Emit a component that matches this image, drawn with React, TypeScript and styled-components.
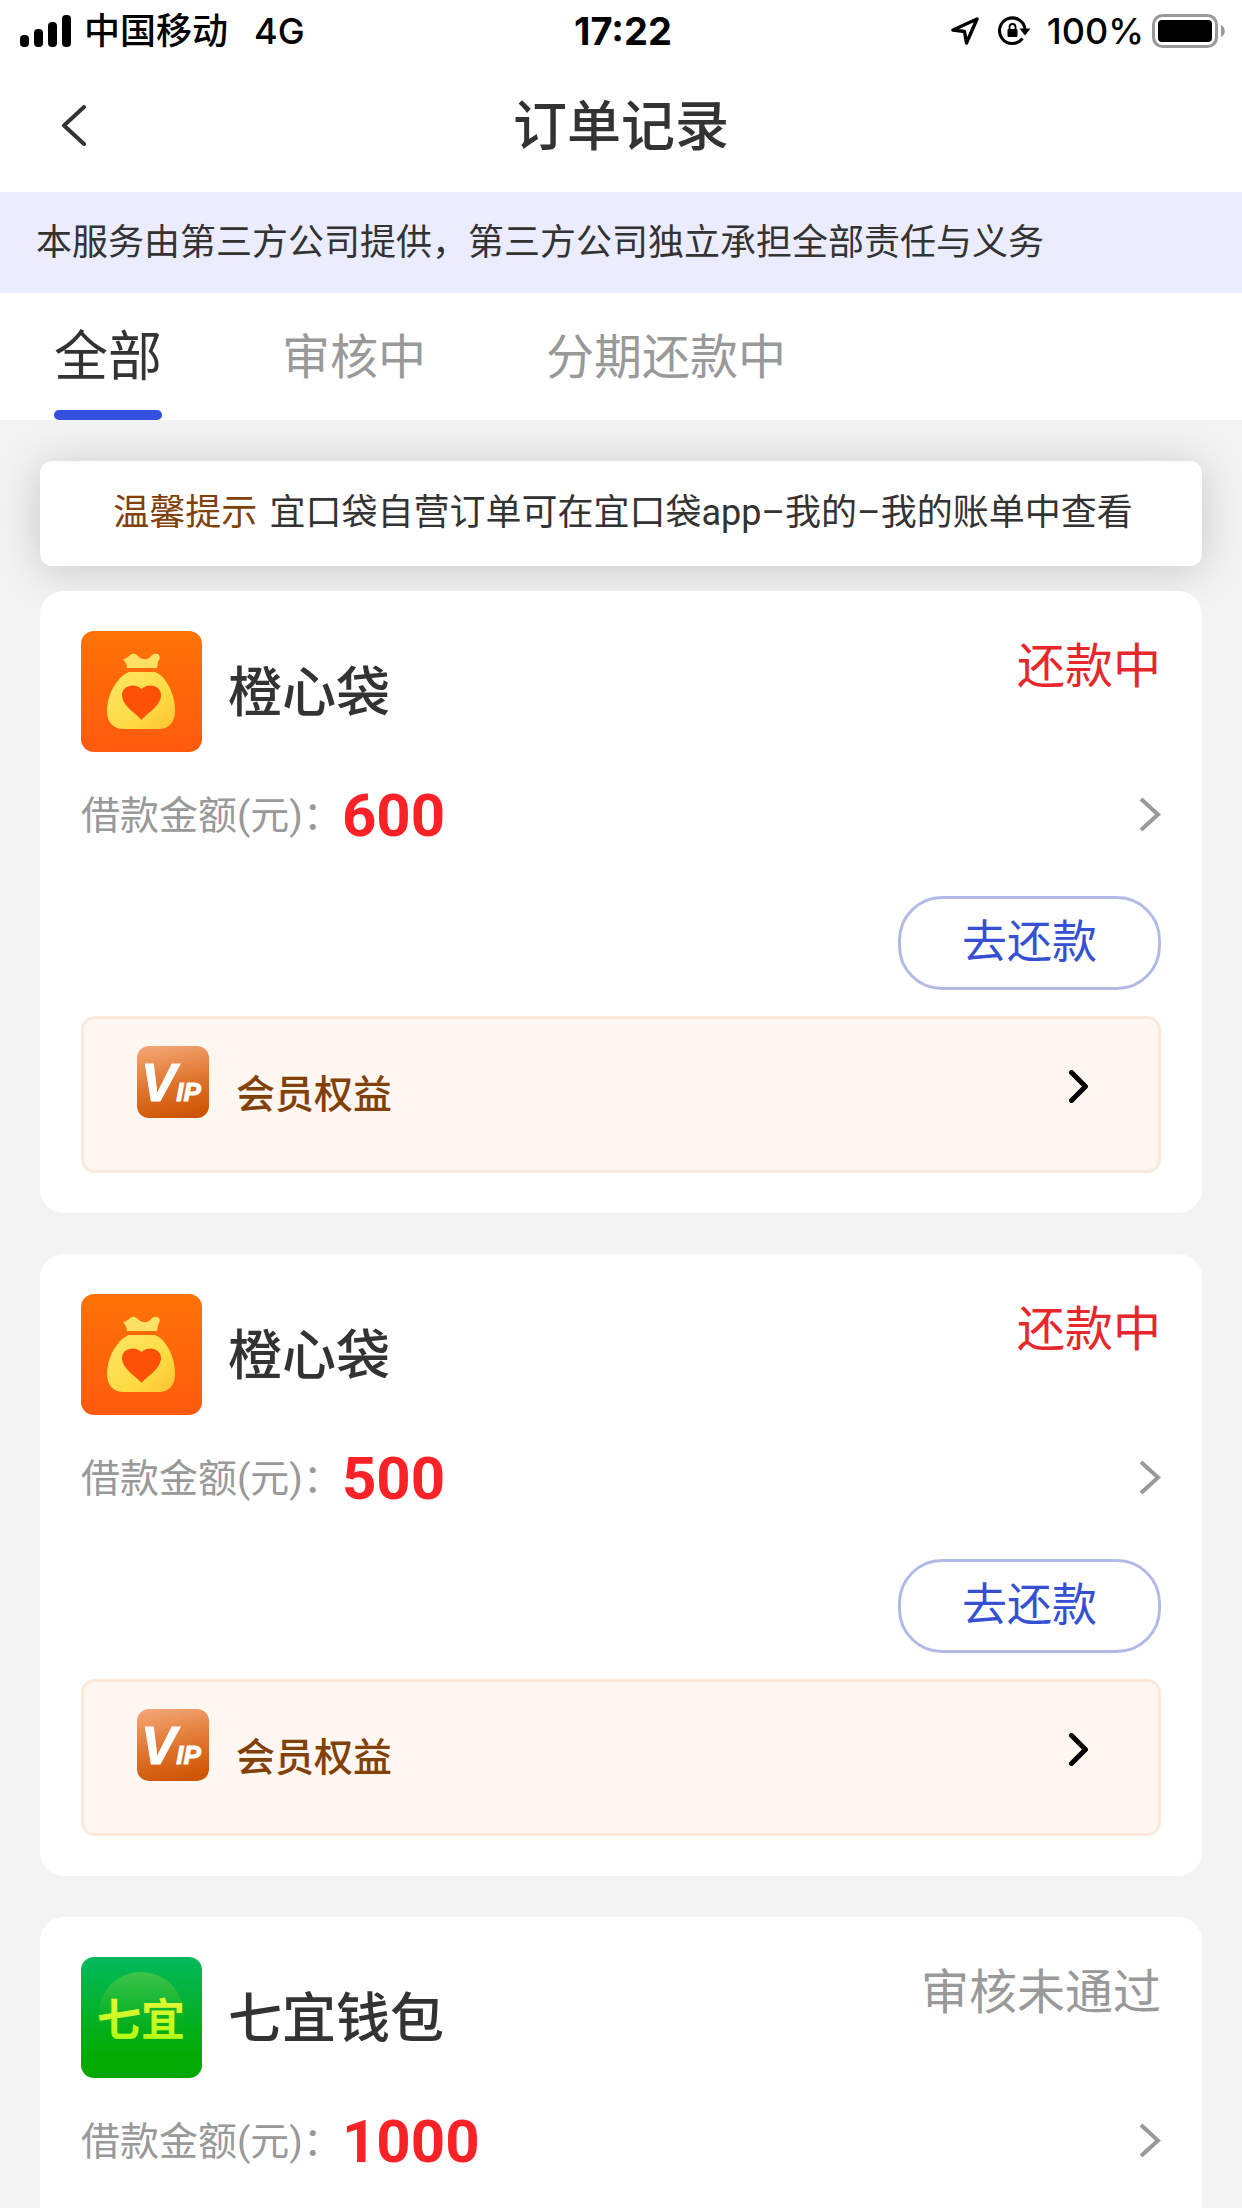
import React, { useState } from "react";
import styled, { createGlobalStyle } from "styled-components";

const GlobalStyle = createGlobalStyle`
  *, *::before, *::after { box-sizing: border-box; }
  body {
    margin: 0;
    background: #f3f3f3;
    color: #333;
    font-family: Roboto, "Noto Sans CJK SC", sans-serif;
  }
  button { font: inherit; color: inherit; background: none; border: 0; padding: 0; cursor: pointer; }
  h1, h2, p { margin: 0; font-weight: 500; }
  svg { display: block; flex: none; }
`;

const Page = styled.div`
  display: flex;
  flex-direction: column;
  height: 100vh;
`;

const StatusBar = styled.div`
  display: grid;
  grid-template-columns: 1fr auto 1fr;
  align-items: center;
  height: 62px;
  padding: 0 16px 0 20px;
  background: #fff;
  color: #000;
  font: 500 36px/62px Inter, "Noto Sans CJK SC", sans-serif;
`;

const StatusLeft = styled.div`
  display: flex;
  align-items: center;
  gap: 12px;
`;

const Network = styled.span`
  margin-left: 14px;
`;

const Clock = styled.time`
  font-size: 38px;
  font-weight: 700;
`;

const StatusRight = styled.div`
  display: flex;
  align-items: center;
  justify-content: flex-end;
  gap: 8px;
`;

const StatusIcons = styled.div`
  display: flex;
  align-items: center;
  gap: 19px;
  margin-right: 8px;
`;

const NavBar = styled.header`
  display: grid;
  grid-template-columns: 1fr auto 1fr;
  align-items: center;
  height: 130px;
  padding: 0 61px;
  background: #fff;
`;

const BackButton = styled.button`
  justify-self: start;
  padding-bottom: 4px;
`;

const PageTitle = styled.h1`
  padding-top: 2px;
  font-size: 54px;
  line-height: 80px;
`;

const Notice = styled.p`
  padding: 25px 36px 24px;
  background: #ebecfd;
  font-size: 36px;
  font-weight: 400;
  line-height: 52px;
`;

const Tabs = styled.nav`
  display: flex;
  align-items: stretch;
  gap: 120px;
  height: 127px;
  padding: 0 54px;
  background: #fff;
`;

const Tab = styled.button<{ $active: boolean }>`
  display: flex;
  flex-direction: column;
  justify-content: space-between;
  padding-top: 25px;
  color: ${(p) => (p.$active ? "#333" : "#999")};
  font-size: ${(p) => (p.$active ? 54 : 48)}px;
  line-height: 80px;
  white-space: nowrap;

  &::after {
    content: "";
    width: 100%;
    height: 10px;
    border-radius: 5px;
    background: ${(p) => (p.$active ? "#3350e0" : "transparent")};
  }
`;

const Content = styled.main`
  flex: 1;
  min-height: 0;
  overflow-y: auto;
  scrollbar-width: none;
  padding: 41px 40px;
`;

const Tip = styled.p`
  display: flex;
  justify-content: center;
  gap: 12px;
  padding: 26px 16px 27px 20px;
  border-radius: 12px;
  background: #fff;
  box-shadow: 0 4px 44px rgba(0, 0, 0, 0.18);
  font-size: 36px;
  font-weight: 400;
  line-height: 52px;
`;

const TipLabel = styled.span`
  flex: none;
  color: #824108;
`;

const OrderList = styled.div`
  display: flex;
  flex-direction: column;
  gap: 41px;
  margin-top: 25px;
`;

const Card = styled.article`
  padding: 40px 41px;
  border-radius: 24px;
  background: #fff;
`;

const CardHead = styled.div`
  display: flex;
  align-items: center;
  gap: 26px;
`;

const CardTitle = styled.h2`
  flex: 1;
  padding-top: 4px;
  font-size: 54px;
  line-height: 80px;
`;

const State = styled.span<{ $tone: "due" | "muted" }>`
  align-self: flex-start;
  color: ${(p) => (p.$tone === "due" ? "#e8272a" : "#999")};
  font-size: 48px;
  line-height: 72px;
`;

const AmountRow = styled.button`
  display: flex;
  align-items: center;
  width: 100%;
  height: 128px;
  padding-bottom: 4px;
  text-align: left;
`;

const AmountLabel = styled.span`
  padding-bottom: 4px;
  color: #999;
  font-size: 39px;
`;

const Amount = styled.strong`
  flex: 1;
  padding-top: 4px;
  color: #fa2226;
  font-size: 60px;
  font-weight: 700;
  line-height: 80px;
`;

const Actions = styled.div`
  display: flex;
  justify-content: flex-end;
  margin: 16px 0 26px;
`;

const RepayButton = styled.button`
  height: 94px;
  padding: 0 61px 10px;
  border: 3px solid #b3bae6;
  border-radius: 44px;
  color: #3650d2;
  font-size: 45px;
`;

const VipRow = styled.button`
  display: flex;
  align-items: flex-start;
  gap: 27px;
  width: 100%;
  height: 157px;
  padding: 27px 69px 0 53px;
  border: 3px solid #fbeadb;
  border-radius: 14px;
  background: #fef7f1;
  color: #824108;
  text-align: left;
`;

const VipLabel = styled.span`
  flex: 1;
  padding-top: 21px;
  font-size: 39px;
  font-weight: 500;
  line-height: 56px;
`;

const VipArrow = styled.span`
  padding-top: 24px;
`;

function Chevron({ w, h, stroke, color, back = false, round = true }: {
  w: number; h: number; stroke: number; color: string; back?: boolean; round?: boolean;
}) {
  const s = stroke / 2;
  const near = back ? w - s : s;
  const far = back ? s + 1 : w - s - 1;
  return (
    <svg width={w} height={h} viewBox={`0 0 ${w} ${h}`} fill="none" aria-hidden="true">
      <path
        d={`M${near} ${s}L${far} ${h / 2}L${near} ${h - s}`}
        stroke={color}
        strokeWidth={stroke}
        strokeLinecap={round ? "round" : "butt"}
        strokeLinejoin={round ? "round" : "miter"}
      />
    </svg>
  );
}

const SignalIcon = () => (
  <svg width="52" height="32" viewBox="0 0 52 32" aria-hidden="true">
    <rect x="0" y="20" width="9" height="12" rx="4" />
    <rect x="14" y="14" width="9" height="18" rx="4" />
    <rect x="28" y="7" width="9" height="25" rx="4" />
    <rect x="42" y="0" width="9" height="32" rx="4" />
  </svg>
);

const LocationIcon = () => (
  <svg width="28" height="28" viewBox="0 0 28 28" fill="none" aria-hidden="true">
    <path d="M26 2L2 13L13.500 14.500L15.500 26Z" stroke="#000" strokeWidth="3.400" strokeLinejoin="round" />
  </svg>
);

const RotationLockIcon = () => (
  <svg width="33" height="30" viewBox="0 0 33 30" fill="none" aria-hidden="true">
    <path d="M24.500 22.500A12.800 12.800 0 1 1 27 13" stroke="#000" strokeWidth="3" />
    <path d="M21.500 12.500h11l-5.500 7z" fill="#000" />
    <rect x="9.500" y="13" width="10" height="8" rx="1" fill="#000" />
    <path d="M11.500 13v-2a3 3 0 0 1 6 0v2" stroke="#000" strokeWidth="1.800" />
  </svg>
);

const BatteryIcon = () => (
  <svg width="74" height="34" viewBox="0 0 74 34" fill="none" aria-hidden="true">
    <rect x="1.500" y="1.500" width="63" height="31" rx="9" stroke="#999" strokeWidth="3" />
    <rect x="6" y="6" width="54" height="22" rx="4" fill="#000" />
    <path d="M69 11c5 2 5 10 0 12z" fill="#999" />
  </svg>
);

const BagLogo = () => (
  <svg width="121" height="121" viewBox="0 0 121 121" role="img" aria-label="橙心袋">
    <defs>
      <linearGradient id="bagBg" x1="0" y1="0" x2="0" y2="1">
        <stop offset="0" stopColor="#ff7306" />
        <stop offset="1" stopColor="#ff5a0e" />
      </linearGradient>
      <linearGradient id="bagFill" x1="0" y1="0" x2="1" y2="1">
        <stop offset="0" stopColor="#ffe664" />
        <stop offset="0.6" stopColor="#ffdc45" />
        <stop offset="1" stopColor="#ffc22e" />
      </linearGradient>
    </defs>
    <rect width="121" height="121" rx="13" fill="url(#bagBg)" />
    <path
      d="M46 37c0-4-2-6-4-9c2 0 4-1 6-3c4-4 7-2 10 1c4 3 8 3 11 0c2-2 4-4 7-3c4 1 3 5 1 8l-1 6z"
      fill="#ffe066"
    />
    <path
      d="M48 41h26c9 3 20 19 20 39c0 12-7 18-16 18H43c-10 0-17-6-17-18c0-20 13-36 22-39z"
      fill="url(#bagFill)"
    />
    <path
      d="M60.500 89C56 83 41 75 41 64c0-9 12-13 19.500-6C68 51 80 55 80 64c0 11-15 19-19.500 25z"
      fill="#ff5008"
    />
  </svg>
);

const QiyiLogo = () => (
  <svg width="121" height="121" viewBox="0 0 121 121" role="img" aria-label="七宜钱包">
    <defs>
      <linearGradient id="qiyiBg" x1="0" y1="0" x2="0" y2="1">
        <stop offset="0" stopColor="#02b95c" />
        <stop offset="0.8" stopColor="#02ab04" />
        <stop offset="1" stopColor="#02a800" />
      </linearGradient>
      <linearGradient id="qiyiDisc" x1="0" y1="0" x2="0" y2="1">
        <stop offset="0" stopColor="#40c448" />
        <stop offset="0.7" stopColor="#1fb51c" stopOpacity="0" />
      </linearGradient>
      <linearGradient id="qiyiText" x1="0" y1="0" x2="0" y2="1">
        <stop offset="0" stopColor="#f4f53e" />
        <stop offset="1" stopColor="#a6ff10" />
      </linearGradient>
    </defs>
    <rect width="121" height="121" rx="13" fill="url(#qiyiBg)" />
    <circle cx="60" cy="58" r="43" fill="url(#qiyiDisc)" />
    <text
      x="60"
      y="79"
      textAnchor="middle"
      fontFamily="'Noto Sans CJK SC', sans-serif"
      fontSize="44"
      fontWeight="700"
      fill="url(#qiyiText)"
    >
      七宜
    </text>
  </svg>
);

const VipIcon = () => (
  <svg width="72" height="72" viewBox="0 0 72 72" aria-hidden="true">
    <defs>
      <linearGradient id="vipBg" x1="0.3" y1="0" x2="0.5" y2="1">
        <stop offset="0" stopColor="#f3a473" />
        <stop offset="0.5" stopColor="#e07832" />
        <stop offset="1" stopColor="#cf5503" />
      </linearGradient>
    </defs>
    <rect width="72" height="72" rx="12" fill="url(#vipBg)" />
    <text
      x="4"
      y="55"
      fill="#fff"
      stroke="#fff"
      strokeWidth="1"
      fontFamily="'Liberation Sans', sans-serif"
      fontSize="53"
      fontWeight="700"
      fontStyle="italic"
    >
      V
      <tspan fontSize="26">IP</tspan>
    </text>
  </svg>
);

type Order = {
  id: number;
  name: string;
  amount: number;
  logo: "bag" | "qiyi";
  state: string;
  due: boolean;
};

const orders: Order[] = [
  { id: 1, name: "橙心袋", amount: 600, logo: "bag", state: "还款中", due: true },
  { id: 2, name: "橙心袋", amount: 500, logo: "bag", state: "还款中", due: true },
  { id: 3, name: "七宜钱包", amount: 1000, logo: "qiyi", state: "审核未通过", due: false },
];

const tabs = ["全部", "审核中", "分期还款中"];

function OrderCard({ order }: { order: Order }) {
  return (
    <Card>
      <CardHead>
        {order.logo === "bag" ? <BagLogo /> : <QiyiLogo />}
        <CardTitle>{order.name}</CardTitle>
        <State $tone={order.due ? "due" : "muted"}>{order.state}</State>
      </CardHead>
      <AmountRow type="button">
        <AmountLabel>借款金额(元)：</AmountLabel>
        <Amount>{order.amount}</Amount>
        <Chevron w={22} h={35} stroke={4} color="#999" round={false} />
      </AmountRow>
      {order.due && (
        <>
          <Actions>
            <RepayButton type="button">去还款</RepayButton>
          </Actions>
          <VipRow type="button">
            <VipIcon />
            <VipLabel>会员权益</VipLabel>
            <VipArrow>
              <Chevron w={20} h={33} stroke={5} color="#000" />
            </VipArrow>
          </VipRow>
        </>
      )}
    </Card>
  );
}

export default function App() {
  const [active, setActive] = useState(tabs[0]);
  return (
    <Page>
      <GlobalStyle />
      <StatusBar>
        <StatusLeft>
          <SignalIcon />
          <span>中国移动</span>
          <Network>4G</Network>
        </StatusLeft>
        <Clock>17:22</Clock>
        <StatusRight>
          <StatusIcons>
            <LocationIcon />
            <RotationLockIcon />
          </StatusIcons>
          <span>100%</span>
          <BatteryIcon />
        </StatusRight>
      </StatusBar>
      <NavBar>
        <BackButton type="button" aria-label="返回">
          <Chevron w={25} h={41} stroke={4} color="#333" back />
        </BackButton>
        <PageTitle>订单记录</PageTitle>
      </NavBar>
      <Notice>本服务由第三方公司提供，第三方公司独立承担全部责任与义务</Notice>
      <Tabs>
        {tabs.map((t) => (
          <Tab key={t} type="button" $active={t === active} onClick={() => setActive(t)}>
            {t}
          </Tab>
        ))}
      </Tabs>
      <Content>
        <Tip>
          <TipLabel>温馨提示</TipLabel>
          <span>宜口袋自营订单可在宜口袋app–我的–我的账单中查看</span>
        </Tip>
        <OrderList>
          {orders.map((o) => (
            <OrderCard key={o.id} order={o} />
          ))}
        </OrderList>
      </Content>
    </Page>
  );
}
